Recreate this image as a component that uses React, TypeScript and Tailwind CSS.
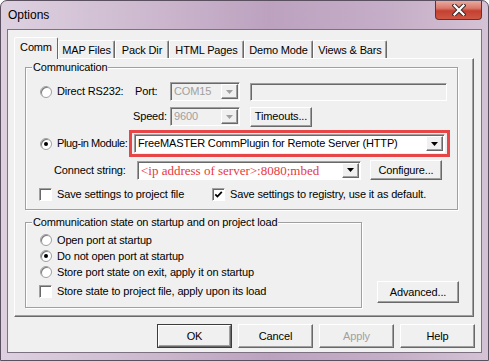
const FONT = "font-['Liberation_Sans',Arial,sans-serif] text-[11px] leading-[13px] tracking-[-0.15px] text-black whitespace-nowrap";

const raised =
  "border border-t-white border-l-white border-r-[#696969] border-b-[#696969] shadow-[inset_-1px_-1px_0_#a0a0a0] bg-[#f0f0f0]";
const sunken =
  "border border-t-[#a0a0a0] border-l-[#a0a0a0] border-r-white border-b-white shadow-[inset_1px_1px_0_#696969]";

const Arrow = ({ disabled }: { disabled?: boolean }) => (
  <div className={`flex h-full w-[17px] shrink-0 items-center justify-center ${raised}`}>
    <svg width="7" height="4" viewBox="0 0 7 4">
      <path d="M0 0 H7 L3.5 4 Z" fill={disabled ? "#a0a0a0" : "#000"} />
    </svg>
  </div>
);

type ComboProps = {
  className: string;
  text: string;
  disabled?: boolean;
  serif?: boolean;
};

const Combo = ({ className, text, disabled, serif }: ComboProps) => (
  <div className={`flex h-[19px] items-stretch p-[1px] ${sunken} ${disabled ? "bg-[#f0f0f0]" : "bg-white"} ${className}`}>
    <div
      className={`flex flex-1 items-center overflow-hidden pl-[2px] ${
        disabled ? "text-[#a0a0a0]" : ""
      } ${serif ? "font-['Liberation_Serif',serif] text-[13px] tracking-normal text-[#e8383d]" : ""}`}
    >
      {text}
    </div>
    <Arrow disabled={disabled} />
  </div>
);

const Button = ({
  className,
  children,
  disabled,
  isDefault,
}: {
  className: string;
  children: string;
  disabled?: boolean;
  isDefault?: boolean;
}) => (
  <div className={`flex shrink-0 ${isDefault ? "border border-[#3c3c3c]" : ""} ${className}`}>
    <div
      className={`flex flex-1 items-center justify-center ${raised} ${
        disabled ? "text-[#a0a0a0]" : ""
      }`}
    >
      {children}
    </div>
  </div>
);

const Radio = ({ checked }: { checked?: boolean }) => (
  <div className="flex h-[12px] w-[12px] shrink-0 items-center justify-center rounded-full border border-[#a0a0a0] bg-white shadow-[inset_1px_1px_0_#7a7a7a]">
    {checked && <div className="h-[4px] w-[4px] rounded-full bg-black" />}
  </div>
);

const Checkbox = ({ checked }: { checked?: boolean }) => (
  <div className={`flex h-[13px] w-[13px] shrink-0 items-center justify-center bg-white ${sunken}`}>
    {checked && (
      <svg width="9" height="9" viewBox="0 0 9 9">
        <path d="M1.3 4.3 L3.4 6.5 L7.8 1.8" fill="none" stroke="#000" strokeWidth="1.8" />
      </svg>
    )}
  </div>
);

const Group = ({
  label,
  className,
  children,
}: {
  label: string;
  className: string;
  children: React.ReactNode;
}) => (
  <div
    className={`relative shrink-0 border border-[#a0a0a0] shadow-[inset_1px_1px_0_white,1px_1px_0_white] ${className}`}
  >
    <span className="absolute -top-[7px] left-[6px] bg-[#f0f0f0] px-[1px]">{label}</span>
    {children}
  </div>
);

const tabs = [
  { name: "MAP Files", w: "w-[57px]" },
  { name: "Pack Dir", w: "w-[54px]" },
  { name: "HTML Pages", w: "w-[75px]" },
  { name: "Demo Mode", w: "w-[69px]" },
  { name: "Views & Bars", w: "w-[74px]" },
];

export default function App() {
  return (
    <div
      className={`${FONT} relative flex h-[361px] w-[489px] flex-col overflow-hidden rounded-t-[7px] border border-[#5a5060] bg-[linear-gradient(90deg,#ddd1e0_0%,#cdb9cf_30%,#bca2bf_55%,#c5aec7_80%,#d4c2d5_100%)]`}
    >
      {/* title bar */}
      <div className="flex h-[28px] shrink-0 items-start">
        <span className="pl-[7px] pt-[7px] text-[12px] leading-[15px] tracking-normal">Options</span>
        <div className="ml-auto mr-[6px] flex h-[19px] w-[47px] items-center justify-center rounded-b-[4px] border border-t-0 border-[#6b2f2a] bg-[linear-gradient(180deg,#e9aa9e_0%,#d9786a_40%,#c4402f_55%,#cf5744_100%)]">
          <svg width="14" height="12" viewBox="0 0 14 12">
            <path d="M2.5 1.5 L11.5 10.5 M11.5 1.5 L2.5 10.5" stroke="#3b2b2b" strokeWidth="4.2" strokeLinecap="square" />
            <path d="M2.5 1.5 L11.5 10.5 M11.5 1.5 L2.5 10.5" stroke="#ffffff" strokeWidth="2.2" strokeLinecap="square" />
          </svg>
        </div>
      </div>

      {/* client area */}
      <div className="ml-[6px] flex h-[324px] w-[475px] flex-col border border-[#7d7080] bg-[#f0f0f0]">
        {/* tabs */}
        <div className="ml-[6px] mt-[7px] flex h-[21px] items-end">
          <div className="relative z-10 -mb-[1px] flex h-[22px] w-[44px] items-start justify-center rounded-t-[2px] border-l border-t border-r border-l-white border-t-white border-r-[#696969] bg-[#f0f0f0] pt-[3px]">
            Comm
          </div>
          {tabs.map((t) => (
            <div
              key={t.name}
              className={`flex h-[18px] items-start justify-center rounded-t-[2px] border-l border-t border-r border-l-white border-t-white border-r-[#696969] pt-[3px] shadow-[inset_-1px_0_0_#a0a0a0] ${t.w}`}
            >
              {t.name}
            </div>
          ))}
        </div>

        {/* tab panel */}
        <div className={`ml-[6px] flex h-[259px] w-[460px] flex-col border border-t-white border-l-white border-r-[#696969] border-b-[#696969] shadow-[inset_-1px_-1px_0_#a0a0a0]`}>
          <Group label="Communication" className="ml-[10px] mt-[8px] h-[143px] w-[433px]">
            <div className="flex flex-col">
              {/* row 1 */}
              <div className="mt-[14px] flex h-[19px] items-center">
                <div className="ml-[14px]">
                  <Radio />
                </div>
                <span className="ml-[5px] w-[78px]">Direct RS232:</span>
                <span className="w-[35px]">Port:</span>
                <Combo className="w-[70px]" text="COM15" disabled />
                <div className={`ml-[10px] h-[18px] w-[197px] bg-[#f0f0f0] ${sunken}`} />
              </div>
              {/* row 2 */}
              <div className="mt-[6px] flex h-[19px] items-center">
                <span className="ml-[107px] w-[37px]">Speed:</span>
                <Combo className="w-[70px]" text="9600" disabled />
                <Button className="ml-[10px] h-[20px] w-[62px]">Timeouts...</Button>
              </div>
              {/* row 3 */}
              <div className="mt-[4px] flex h-[27px] items-center">
                <div className="ml-[14px]">
                  <Radio checked />
                </div>
                <span className="ml-[5px] w-[72px] shrink-0 tracking-[-0.4px]">Plug-in Module:</span>
                <div className="flex h-[27px] w-[321px] shrink-0 items-center border-[3px] border-[#e84646] px-[2px]">
                  <Combo className="w-full" text="FreeMASTER CommPlugin for Remote Server (HTTP)" />
                </div>
              </div>
              {/* row 4 */}
              <div className="mt-[3px] flex h-[20px] items-center">
                <span className="ml-[28px] w-[83px]">Connect string:</span>
                <Combo className="w-[224px]" text="<ip address of server>:8080;mbed" serif />
                <Button className="ml-[9px] h-[20px] w-[72px]">Configure...</Button>
              </div>
              {/* row 5 */}
              <div className="mt-[8px] flex h-[13px] items-center">
                <div className="ml-[13px]">
                  <Checkbox />
                </div>
                <span className="ml-[5px] w-[155px]">Save settings to project file</span>
                <Checkbox checked />
                <span className="ml-[5px]">Save settings to registry, use it as default.</span>
              </div>
            </div>
          </Group>

          <div className="mt-[12px] flex items-end">
            <Group
              label="Communication state on startup and on project load"
              className="ml-[10px] h-[86px] w-[337px]"
            >
              <div className="mt-[9px] flex flex-col">
                {[
                  { t: "Open port at startup", c: false },
                  { t: "Do not open port at startup", c: true },
                  { t: "Store port state on exit, apply it on startup", c: false },
                ].map((r) => (
                  <div key={r.t} className="flex h-[16px] items-center">
                    <div className="ml-[14px]">
                      <Radio checked={r.c} />
                    </div>
                    <span className="ml-[5px]">{r.t}</span>
                  </div>
                ))}
                <div className="mt-[5px] flex h-[13px] items-center">
                  <div className="ml-[13px]">
                    <Checkbox />
                  </div>
                  <span className="ml-[5px]">Store state to project file, apply upon its load</span>
                </div>
              </div>
            </Group>
            <Button className="mb-[5px] ml-[15px] h-[22px] w-[82px]">Advanced...</Button>
          </div>
        </div>

        {/* dialog buttons */}
        <div className="mt-[7px] flex">
          <Button className="ml-[149px] h-[24px] w-[75px]" isDefault>
            OK
          </Button>
          <Button className="ml-[6px] h-[24px] w-[75px]">Cancel</Button>
          <Button className="ml-[6px] h-[24px] w-[75px]" disabled>
            Apply
          </Button>
          <Button className="ml-[6px] h-[24px] w-[75px]">Help</Button>
        </div>
      </div>
    </div>
  );
}
